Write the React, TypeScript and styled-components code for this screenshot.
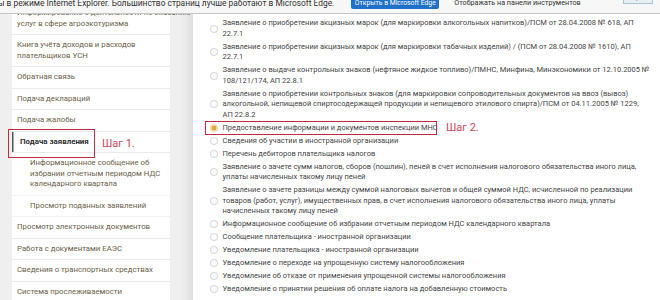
import React from 'react';
import styled, { createGlobalStyle } from 'styled-components';

const GlobalStyle = createGlobalStyle`
  html, body {
    margin: 0;
    padding: 0;
    width: 660px;
    height: 300px;
    overflow: hidden;
    background: #efefef;
  }
  body {
    font-family: Roboto, "Liberation Sans", sans-serif;
  }
`;

const Page = styled.div`
  width: 660px;
  height: 300px;
  display: flex;
  flex-direction: column;
  overflow: hidden;
`;

const NoticeBar = styled.div`
  box-sizing: border-box;
  height: 24px;
  flex-shrink: 0;
  margin-top: -10px;
  display: flex;
  align-items: center;
  background: #f7f7f7;
  border-bottom: 1px solid #c6c6c6;
  position: relative;
  z-index: 2;
  font-size: 8.4px;
  line-height: 12px;
  color: #333;
  white-space: nowrap;
`;

const NoticeText = styled.span`
  margin-left: -2px;
  padding-top: 3px;
`;

const EdgeButton = styled.button`
  margin-left: 17px;
  width: 88px;
  height: 12px;
  margin-top: 2px;
  padding: 0;
  border: none;
  border-radius: 2px;
  background: #1f70c8;
  color: #fff;
  font-family: inherit;
  font-size: 6.8px;
  line-height: 12px;
  white-space: nowrap;
  overflow: hidden;
`;

const NoticeLink = styled.span`
  margin-left: 15px;
  padding-top: 3px;
  font-size: 7.2px;
  color: #333;
`;

const CloseButton = styled.button`
  margin-left: auto;
  margin-right: 7px;
  align-self: flex-start;
  width: 30px;
  height: 14px;
  padding: 0;
  border: 1px solid #a9c3cf;
  background: #e9f0f3;
  color: #557;
  font-family: inherit;
  font-size: 6px;
`;

const Main = styled.div`
  display: flex;
  align-items: flex-start;
  margin-top: -11px;
  flex-shrink: 0;
`;

const Sidebar = styled.div`
  width: 158px;
  margin-left: 12px;
  background: #fff;
  flex-shrink: 0;
`;

const MenuItem = styled.div<{ $sub?: boolean; $active?: boolean }>`
  position: relative;
  padding: 5px 0 5px ${p => (p.$active ? 8 : p.$sub ? 18 : 5)}px;
  border-bottom: 1px solid ${p => (p.$sub ? '#f3f3f3' : '#e9e9e9')};
  box-shadow: ${p => (p.$active ? 'inset 1.5px 0 0 #555' : 'none')};
  font-size: ${p => (p.$active ? 7.9 : 7.8)}px;
  font-weight: ${p => (p.$active ? 700 : 400)};
  color: ${p => (p.$active ? '#2f2f2f' : '#6a6149')};
  white-space: nowrap;
`;

const Line = styled.div`
  height: 10.5px;
  line-height: 10.5px;
`;

const StepBox = styled.div<{ $l: number; $t: number; $w: number; $h: number }>`
  position: absolute;
  left: ${p => p.$l}px;
  top: ${p => p.$t}px;
  width: ${p => p.$w}px;
  height: ${p => p.$h}px;
  box-sizing: border-box;
  border: 1.5px solid #c42a3e;
  pointer-events: none;
`;

const StepLabel = styled.span<{ $l: number; $t: number }>`
  position: absolute;
  left: ${p => p.$l}px;
  top: ${p => p.$t}px;
  font-size: 11px;
  line-height: 12px;
  font-weight: 400;
  color: #c34a60;
`;

const Content = styled.div`
  flex: 1;
  align-self: stretch;
  min-height: 300px;
  margin-left: 23px;
  padding: 15px 0 0 17px;
  background: #fff;
  box-shadow: -4px 0 10px rgba(0, 0, 0, 0.09);
`;

const Option = styled.div<{ $selected?: boolean }>`
  position: relative;
  display: flex;
  align-items: center;
  gap: 4.5px;
  margin-bottom: 2.5px;
  margin-top: ${p => (p.$selected ? '1px' : '0')};
`;

const Radio = styled.span<{ $checked?: boolean }>`
  box-sizing: border-box;
  flex-shrink: 0;
  width: 8px;
  height: 8px;
  border-radius: 50%;
  border: 1px solid ${p => (p.$checked ? '#eccf9c' : '#d6d6d6')};
  background: ${p =>
    p.$checked
      ? 'radial-gradient(circle, #eda23a 0 2.2px, #f7e3bd 2.6px)'
      : '#fff'};
  box-shadow: 0 0 1px rgba(0, 0, 0, 0.08);
`;

const OptionText = styled.div`
  font-size: 7.5px;
  color: #454545;
  white-space: nowrap;
`;

const menu: { lines: string[]; sub?: boolean; active?: boolean }[] = [
  { lines: ['Информирование о деятельности по оказанию', 'услуг в сфере агроэкотуризма'] },
  { lines: ['Книга учёта доходов и расходов', 'плательщиков УСН'] },
  { lines: ['Обратная связь'] },
  { lines: ['Подача деклараций'] },
  { lines: ['Подача жалобы'] },
  { lines: ['Подача заявления'], active: true },
  {
    lines: ['Информационное сообщение об', 'избрании отчетным периодом НДС', 'календарного квартала'],
    sub: true,
  },
  { lines: ['Просмотр поданных заявлений'], sub: true },
  { lines: ['Просмотр электронных документов'] },
  { lines: ['Работа с документами ЕАЭС'] },
  { lines: ['Сведения о транспортных средствах'] },
  { lines: ['Система прослеживаемости'] },
];

const options: { lines: string[]; selected?: boolean }[] = [
  {
    lines: [
      'Заявление о приобретении акцизных марок (для маркировки алкогольных напитков)/ПСМ от 28.04.2008 № 618, АП',
      '22.7.1',
    ],
  },
  {
    lines: [
      'Заявление о приобретении акцизных марок (для маркировки табачных изделий) / (ПСМ от 28.04.2008 № 1610), АП',
      '22.7.1',
    ],
  },
  {
    lines: [
      'Заявление о выдаче контрольных знаков (нефтяное жидкое топливо)/ПМНС, Минфина, Минэкономики от 12.10.2005 №',
      '108/121/174, АП 22.8.1',
    ],
  },
  {
    lines: [
      'Заявление о приобретении контрольных знаков (для маркировки сопроводительных документов на ввоз (вывоз)',
      'алкогольной, непищевой спиртосодержащей продукции и непищевого этилового спирта)/ПСМ от 04.11.2005 № 1229,',
      'АП 22.8.2',
    ],
  },
  { lines: ['Предоставление информации и документов инспекции МНС'], selected: true },
  { lines: ['Сведения об участии в иностранной организации'] },
  { lines: ['Перечень дебиторов плательщика налогов'] },
  {
    lines: [
      'Заявление о зачете сумм налогов, сборов (пошлин), пеней в счет исполнения налогового обязательства иного лица,',
      'уплаты начисленных такому лицу пеней',
    ],
  },
  {
    lines: [
      'Заявление о зачете разницы между суммой налоговых вычетов и общей суммой НДС, исчисленной по реализации',
      'товаров (работ, услуг), имущественных прав, в счет исполнения налогового обязательства иного лица, уплаты',
      'начисленных такому лицу пеней',
    ],
  },
  { lines: ['Информационное сообщение об избрании отчетным периодом НДС календарного квартала'] },
  { lines: ['Сообщение плательщика - иностранной организации'] },
  { lines: ['Уведомление плательщика - иностранной организации'] },
  { lines: ['Уведомление о переходе на упрощенную систему налогообложения'] },
  { lines: ['Уведомление об отказе от применения упрощенной системы налогообложения'] },
  { lines: ['Уведомление о принятии решения об оплате налога на добавленную стоимость'] },
];

const renderLines = (lines: string[]) => lines.map((l, i) => <Line key={i}>{l}</Line>);

const App: React.FC = () => {
  return (
    <Page>
      <GlobalStyle />
      <NoticeBar>
        <NoticeText>
          ы в режиме Internet Explorer. Большинство страниц лучше работают в Microsoft Edge.
        </NoticeText>
        <EdgeButton>Открыть в Microsoft Edge</EdgeButton>
        <NoticeLink>Отображать на панели инструментов</NoticeLink>
        <CloseButton>Закрыть</CloseButton>
      </NoticeBar>

      <Main>
        <Sidebar>
          {menu.map((m, i) => (
            <MenuItem key={i} $sub={m.sub} $active={m.active}>
              {renderLines(m.lines)}
              {m.active && (
                <>
                  <StepBox $l={-4} $t={-3} $w={87} $h={29} />
                  <StepLabel $l={90} $t={6}>
                    Шаг 1.
                  </StepLabel>
                </>
              )}
            </MenuItem>
          ))}
        </Sidebar>

        <Content>
          {options.map((o, i) => (
            <Option key={i} $selected={o.selected}>
              <Radio $checked={o.selected} />
              <OptionText>{renderLines(o.lines)}</OptionText>
              {o.selected && (
                <>
                  <StepBox $l={-5} $t={-2} $w={232} $h={14} />
                  <StepLabel $l={236} $t={-1}>
                    Шаг 2.
                  </StepLabel>
                </>
              )}
            </Option>
          ))}
        </Content>
      </Main>
    </Page>
  );
};

export default App;
